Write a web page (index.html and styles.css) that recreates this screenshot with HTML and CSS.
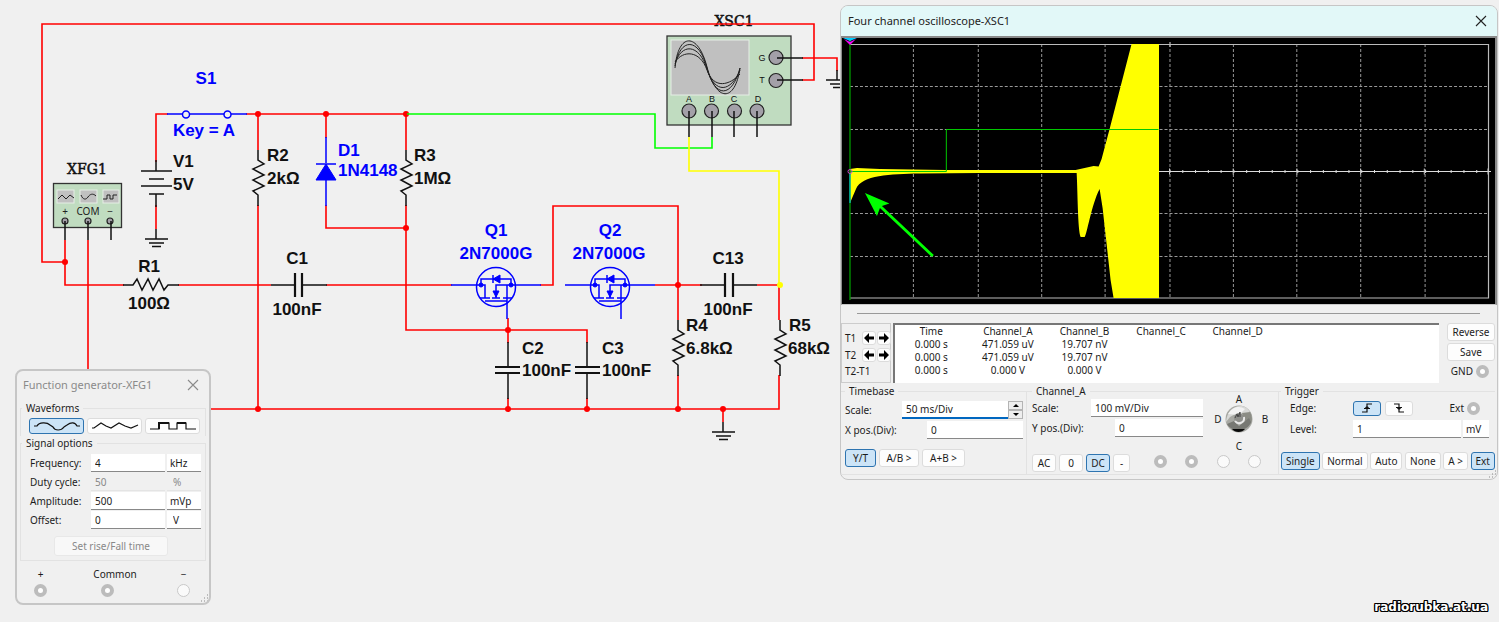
FILE: index.html
```html
<!DOCTYPE html>
<html lang="en">
<head>
<meta charset="utf-8">
<title>Circuit simulation</title>
<link rel="stylesheet" href="styles.css">
</head>
<body>
<main class="workspace">
  <svg class="circuit" viewBox="0 0 841 622" role="img" aria-label="Circuit schematic">
    <defs>
      <path id="resistor" class="part" d="M0 -28V-18L6 -14L-5 -9L6 -3L-5 2L6 8L-5 13L0 17V28"/>
      <g id="ground" class="part"><path d="M0 -10V0M-11 0H12M-7 4H8M-4 7.500H5"/></g>
      <g id="mosfet" class="blue">
        <circle cx="0" cy="0" r="19.500"/>
        <path d="M-45 -2H-15V-8H15V-2H45M-15 -2H-11V11M-16 11H-6M-4 11H4M7 11H16M0 11V-2H15M11 -2V32M-11 14H11M-3 -12V-4"/>
        <path class="solid" d="M-3 -8L4 -12V-4ZM0 10L-3 4H3Z"/>
        <circle class="solid" cx="-15" cy="-2" r="2"/><circle class="solid" cx="15" cy="-2" r="2"/>
      </g>
    </defs>

    <text class="mono" x="734" y="26" text-anchor="middle">XSC1</text>

    <g class="wire">
      <path d="M65 240V285H124M65 262H42V24H814V80H802M88 240V409H779V375"/>
      <path d="M156 162V114H168M156 205V229M246 114H406M258 114V150M258 205V409M326 114V138M326 205V228H406"/>
      <path d="M406 114V150M406 205V330H587V343M178 285H271M326 285H452M540 285H553V206H678V320M508 318V343M508 398V409M587 398V409"/>
      <path d="M655 285H702M757 285H779V320M678 375V409M723 409V422M802 58H837V71"/>
    </g>
    <g class="dots">
      <circle cx="65" cy="262" r="3"/><circle cx="258" cy="114" r="3"/><circle cx="326" cy="114" r="3"/><circle cx="406" cy="114" r="3"/>
      <circle cx="406" cy="228" r="3"/><circle cx="508" cy="330" r="3"/><circle cx="678" cy="285" r="3"/><circle cx="258" cy="409" r="3"/>
      <circle cx="508" cy="409" r="3"/><circle cx="587" cy="409" r="3"/><circle cx="678" cy="409" r="3"/><circle cx="723" cy="409" r="3"/>
    </g>
    <path class="wire green" d="M407 114H655V148H712V137"/>
    <path class="wire yellow" d="M689 137V171H779V285"/>
    <circle class="node-yellow" cx="780" cy="285" r="3"/>

    <use href="#resistor" x="258" y="178"/><use href="#resistor" x="406" y="178"/>
    <use href="#resistor" x="678" y="348"/><use href="#resistor" x="780" y="348"/>
    <use href="#resistor" transform="translate(151 285) rotate(-90)"/>
    <use href="#ground" x="156" y="239"/><use href="#ground" x="723" y="432"/><use href="#ground" x="837" y="80"/>

    <g class="part">
      <path d="M156 160V171M141 171H172M149 179H164M141 186H172M149 194H164M156 194V207"/>
      <path d="M271 285H295M302 285H327M700 285H725M733 285H757M508 342V367M508 374V399M587 342V367M587 374V399"/>
      <path class="plate" d="M295 273V297M302 273V297M725 273V297M733 273V297M495 367H520M495 373H520M575 367H600M575 373H600"/>
    </g>

    <g class="blue">
      <path d="M167 114H183M189 114H224M231 114H247"/>
      <circle cx="186" cy="114.500" r="3.500"/><circle cx="227.500" cy="114.500" r="3.500"/>
      <path d="M326 137V163M326 180V206M316 164H336"/>
      <path class="solid" d="M326 164L336 180H316Z"/>
    </g>
    <use href="#mosfet" x="496" y="287"/><use href="#mosfet" x="610" y="287"/>

    <g class="label">
      <text x="173" y="167">V1</text><text x="173" y="190">5V</text>
      <text x="267" y="161">R2</text><text x="267" y="184">2kΩ</text>
      <text x="414" y="161">R3</text><text x="414" y="184">1MΩ</text>
      <text x="149" y="272" text-anchor="middle">R1</text><text x="149" y="309" text-anchor="middle">100Ω</text>
      <text x="297" y="264" text-anchor="middle">C1</text><text x="297" y="315" text-anchor="middle">100nF</text>
      <text x="522" y="354">C2</text><text x="522" y="376">100nF</text>
      <text x="602" y="354">C3</text><text x="602" y="376">100nF</text>
      <text x="728" y="264" text-anchor="middle">C13</text><text x="728" y="315" text-anchor="middle">100nF</text>
      <text x="686" y="331">R4</text><text x="686" y="354">6.8kΩ</text>
      <text x="789" y="331">R5</text><text x="788" y="354">68kΩ</text>
    </g>
    <g class="label label-blue">
      <text x="206" y="84" text-anchor="middle">S1</text><text x="204" y="136" text-anchor="middle">Key = A</text>
      <text x="338" y="156">D1</text><text x="338" y="176">1N4148</text>
      <text x="496" y="236" text-anchor="middle">Q1</text><text x="496" y="259" text-anchor="middle">2N7000G</text>
      <text x="610" y="236" text-anchor="middle">Q2</text><text x="609" y="259" text-anchor="middle">2N7000G</text>
    </g>

    <text class="mono" x="87" y="174" text-anchor="middle">XFG1</text>
    <rect class="device" x="53.500" y="183.500" width="68" height="44"/>
    <g class="mini-screen"><rect x="57" y="190" width="17" height="13"/><rect x="80" y="190" width="17" height="13"/><rect x="103" y="190" width="16" height="13"/></g>
    <path class="trace" d="M58 199L62 195L66 199L70 195L74 198M81 195C83 200 86 200 88 197S93 193 96 196M103 199H107V195H110V199H113V195H117"/>
    <g class="port-text"><text x="65" y="215" text-anchor="middle">+</text><text x="88" y="215" text-anchor="middle">COM</text><text x="110" y="215" text-anchor="middle">−</text></g>
    <g class="terminal"><circle cx="65" cy="221" r="3"/><circle cx="88" cy="221" r="3"/><circle cx="110" cy="221" r="3"/></g>
    <path class="part" d="M65 221V240M88 221V240M111 221V240"/>

    <rect class="device" x="667" y="36" width="124" height="89"/>
    <rect class="mini-screen" x="671" y="40" width="78" height="55"/>
    <path class="trace" d="M675 68C678 32 698 32 707 67S735 103 740 68M675 66C680 37 699 37 707 68S732 98 740 68M675 64C681 43 699 43 707 69S731 92 740 70M675 62C683 50 700 50 707 70S730 85 740 74"/>
    <g class="terminal"><circle cx="776" cy="57.500" r="7"/><circle cx="776" cy="80.500" r="7"/><circle cx="689" cy="111" r="7"/><circle cx="711.500" cy="111" r="7"/><circle cx="734.500" cy="111" r="7"/><circle cx="757" cy="111" r="7"/></g>
    <path class="part" d="M777 58H803M777 80H803M689 111V137M712 111V137M734 111V137M757 111V137"/>
    <g class="pin-text"><text x="762" y="61" text-anchor="middle">G</text><text x="762" y="83" text-anchor="middle">T</text><text x="689" y="102" text-anchor="middle">A</text><text x="712" y="102" text-anchor="middle">B</text><text x="734" y="102" text-anchor="middle">C</text><text x="758" y="102" text-anchor="middle">D</text></g>
  </svg>

  <section class="window generator" aria-labelledby="gen-title">
    <header class="titlebar">
      <h2 id="gen-title">Function generator-XFG1</h2>
      <button class="close" aria-label="Close"><svg viewBox="0 0 12 12"><path d="M1 1L11 11M11 1L1 11"/></svg></button>
    </header>
    <div class="gen-body">
      <fieldset class="group waves">
        <legend>Waveforms</legend>
        <div class="wave-row">
          <button class="btn active" aria-label="Sine"><svg viewBox="0 0 48 12"><path d="M1 6H4C6 2 14 2 17 5L20 7C22 11 28 11 31 7L34 5C38 2 42 2 44 6H47"/></svg></button>
          <button class="btn" aria-label="Triangle"><svg viewBox="0 0 48 12"><path d="M1 8H3L10 3L15 6L20 8L28 3L34 6L40 8L47 5"/></svg></button>
          <button class="btn" aria-label="Square"><svg viewBox="0 0 48 12"><path d="M1 9H10V3H20V9H28V3H37V9H47"/><path class="bold" d="M10 9V3H20M28 3H37"/></svg></button>
        </div>
      </fieldset>
      <fieldset class="group signals">
        <legend>Signal options</legend>
        <div class="signal-grid">
          <label for="freq">Frequency:</label><input id="freq" value="4"><select aria-label="Frequency unit"><option>kHz</option></select>
          <label for="duty">Duty cycle:</label><input id="duty" value="50" disabled><select class="indent" aria-label="Duty unit" disabled><option>%</option></select>
          <label for="amp">Amplitude:</label><input id="amp" value="500"><select aria-label="Amplitude unit"><option>mVp</option></select>
          <label for="offs">Offset:</label><input id="offs" value="0"><select class="indent" aria-label="Offset unit"><option>V</option></select>
        </div>
        <button class="btn rise" disabled>Set rise/Fall time</button>
      </fieldset>
      <div class="terminals">
        <label>+<input type="radio" name="plus" checked></label>
        <label class="common">Common<input type="radio" name="common" checked></label>
        <label>−<input type="radio" name="minus"></label>
      </div>
    </div>
    <svg class="grip" viewBox="0 0 9 9"><path d="M7 1h1M4 4h1M7 4h1M1 7h1M4 7h1M7 7h1"/></svg>
  </section>

  <section class="window scope" aria-labelledby="scope-title">
    <header class="titlebar">
      <h2 id="scope-title">Four channel oscilloscope-XSC1</h2>
      <button class="close" aria-label="Close"><svg viewBox="0 0 12 12"><path d="M1 1L11 11M11 1L1 11"/></svg></button>
    </header>
    <svg class="screen" viewBox="842 38 654 266" preserveAspectRatio="none" role="img" aria-label="Oscilloscope display">
      <path class="grid-line" d="M913.500 44V298M978.500 44V298M1042 44V298M1105.500 44V298M1170.500 44V298M1234 44V298M1297.500 44V298M1361.500 44V298M1426 44V298M850 86.500H1489M850 129.500H1489M850 213.500H1489M850 256.500H1489"/>
      <path class="axis-frame" d="M850 44.500H1489.500V298H850M1170.500 42V47"/>
      <path class="axis" d="M850 171.500H1492"/>
      <path class="ticks" d="M1170 171.500H1490"/>
      <path class="ticks-big" d="M1169.500 171.500H1490"/>
      <path class="signal" d="M850 169L857 168L880 169L946 170H979L1076 170L1094 166L1099 166.500L1102 159L1110 129L1132 44H1159.500V298H1114L1111 280L1106 235L1103 208L1100 189C1092 204 1087 236 1085 237H1081C1078 230 1078 190 1077 173H979L920 173.500C890 174 862 175 856 189L850 203Z"/>
      <path class="channel-b" d="M850.500 171.500H946.500V129.500H1159"/>
      <path class="cursor" d="M850 40V300"/>
      <path class="cyan" d="M843 38H857L850 41ZM849.500 173H850.500V203H849.500Z"/>
      <path class="magenta" d="M844 39L850 42L856 39L850 45Z"/>
      <circle class="origin" cx="850" cy="171.500" r="2"/>
      <path class="pointer" d="M865 193L889.500 203.500L882 206L934 255L932 257L880 208L877 216Z"/>
    </svg>
    <hr class="divider">
    <div class="readout">
      <div class="cursors">
        <span>T1</span><button class="btn arrow" aria-label="T1 left"><svg viewBox="0 0 10 10"><path d="M0 5L5 0V3.500H10V6.500H5V10Z"/></svg></button><button class="btn arrow" aria-label="T1 right"><svg viewBox="0 0 10 10"><path d="M10 5L5 0V3.500H0V6.500H5V10Z"/></svg></button>
        <span>T2</span><button class="btn arrow" aria-label="T2 left"><svg viewBox="0 0 10 10"><path d="M0 5L5 0V3.500H10V6.500H5V10Z"/></svg></button><button class="btn arrow" aria-label="T2 right"><svg viewBox="0 0 10 10"><path d="M10 5L5 0V3.500H0V6.500H5V10Z"/></svg></button>
        <span class="delta">T2-T1</span>
      </div>
      <div class="table-wrap">
        <table>
          <thead><tr><th>Time</th><th>Channel_A</th><th>Channel_B</th><th>Channel_C</th><th>Channel_D</th></tr></thead>
          <tbody>
            <tr><td>0.000 s</td><td>471.059 uV</td><td>19.707 nV</td><td></td><td></td></tr>
            <tr><td>0.000 s</td><td>471.059 uV</td><td>19.707 nV</td><td></td><td></td></tr>
            <tr><td>0.000 s</td><td>0.000 V</td><td>0.000 V</td><td></td><td></td></tr>
          </tbody>
        </table>
      </div>
      <div class="side">
        <button class="btn">Reverse</button>
        <button class="btn">Save</button>
        <label>GND<input type="radio" name="gnd" checked></label>
      </div>
    </div>
    <div class="controls">
      <fieldset class="group timebase">
        <legend>Timebase</legend>
        <div class="row"><label for="tb">Scale:</label><input id="tb" class="focus wide" value="50 ms/Div"><span class="spinner"><button aria-label="Increase"><svg viewBox="0 0 8 5"><path d="M1 4L4 1L7 4Z"/></svg></button><button aria-label="Decrease"><svg viewBox="0 0 8 5"><path d="M1 1L4 4L7 1Z"/></svg></button></span></div>
        <div class="row"><label for="xp">X pos.(Div):</label><input id="xp" class="narrow" value="0"></div>
        <div class="buttons"><button class="btn active">Y/T</button><button class="btn">A/B &gt;</button><button class="btn">A+B &gt;</button></div>
      </fieldset>
      <fieldset class="group channel">
        <legend>Channel_A</legend>
        <div class="channel-top">
          <div class="channel-fields">
            <div class="row"><label for="ca">Scale:</label><input id="ca" class="wide" value="100 mV/Div"></div>
            <div class="row"><label for="yp">Y pos.(Div):</label><input id="yp" class="narrow" value="0"></div>
          </div>
          <div class="rotary">
            <span class="north">A</span><span class="west">D</span>
            <svg class="knob" viewBox="0 0 28 28"><circle cx="14" cy="14" r="13.500" fill="#a7a8a3"/><path d="M1 17C2 5 10 0 17 1S28 11 26 15L18 10L12 8L5 12Z" fill="#d7d8d6"/><path d="M3 9C7 2 14 0 20 4L14 10Z" fill="#f2f2f2"/><path d="M17 8L25 7C28 12 27 17 25 19L19 15Z" fill="#8b8c84"/><path d="M2 19L9 16L14 21L24 13L26 17C23 27 7 28 2 19Z" fill="#777873"/><path d="M7 24L20 24C17 28 10 28 7 24Z" fill="#080808"/><circle cx="14" cy="13" r="5" fill="#8e8f8b"/><path d="M10 16C13 20 20 18 19 12" fill="none" stroke="#e8e8e8" stroke-width="2"/><path d="M10 13L12 9L13 12L15 7V12" fill="none" stroke="#444"/></svg>
            <span class="east">B</span><span class="south">C</span>
          </div>
        </div>
        <div class="buttons"><button class="btn">AC</button><button class="btn">0</button><button class="btn active">DC</button><button class="btn">-</button>
          <span class="ports"><input type="radio" name="pa" aria-label="Port A" checked><input type="radio" name="pb" aria-label="Port B" checked><input type="radio" name="pc" aria-label="Port C"><input type="radio" name="pd" aria-label="Port D"></span></div>
      </fieldset>
      <fieldset class="group trigger">
        <legend>Trigger</legend>
        <div class="row"><span class="caption">Edge:</span><span class="edges"><button class="btn active" aria-label="Rising edge"><svg viewBox="0 0 12 10"><path d="M1 9H6V1H11M3 5.500H9M4.500 5L6 3.500L7.500 5"/></svg></button><button class="btn" aria-label="Falling edge"><svg viewBox="0 0 12 10"><path d="M1 1H6V9H11M3 4.500H9M4.500 5L6 6.500L7.500 5"/></svg></button></span><label class="ext">Ext<input type="radio" name="ext" checked></label></div>
        <div class="row level"><label class="caption" for="lv">Level:</label><input id="lv" value="1"><select aria-label="Level unit"><option>mV</option></select></div>
        <div class="buttons"><button class="btn active">Single</button><button class="btn">Normal</button><button class="btn">Auto</button><button class="btn">None</button><button class="btn">A &gt;</button><button class="btn active">Ext</button></div>
      </fieldset>
    </div>
    <svg class="grip" viewBox="0 0 9 9"><path d="M7 1h1M4 4h1M7 4h1M1 7h1M4 7h1M7 7h1"/></svg>
  </section>

  <a class="watermark" href="#">radiorubka.at.ua</a>
</main>
</body>
</html>
```

FILE: styles.css
```css
* { box-sizing: border-box; }
body {
  margin: 0;
  background: #f0f0f0;
  color: #1c1c1c;
  font: 10px/14px "Noto Sans", "Open Sans", sans-serif;
}
button, input, select { font: inherit; color: inherit; margin: 0; }
.workspace { position: relative; min-height: 100vh; overflow: hidden; }

/* Schematic */
.circuit { display: block; width: 841px; max-width: none; }
.wire { fill: none; stroke: #f00; stroke-width: 1.6; }
.wire.green { stroke: #0f0; }
.wire.yellow { stroke: #ff0; }
.dots { fill: #f00; }
.node-yellow { fill: #ff0; }
.part { fill: none; stroke: #111; stroke-width: 1.5; }
.plate { stroke-width: 2.2; }
.blue { fill: none; stroke: #00f; stroke-width: 1.5; }
.blue .solid { fill: #00f; stroke-width: 1; }
.label { font: bold 17px "Liberation Sans", Arial, sans-serif; fill: #111; }
.label-blue { fill: #00f; }
.mono { font: 14px "DejaVu Serif", serif; fill: #111; stroke: #111; stroke-width: .5; }
.device { fill: #c0dcc0; stroke: #333; stroke-width: 1.3; }
.mini-screen { fill: #c0c0c0; stroke: #e6eee6; stroke-width: 1; }
.trace { fill: none; stroke: #222; stroke-width: 1; }
.terminal { fill: #a3a0a8; stroke: #222; stroke-width: 1.2; }
.port-text { font-size: 10px; fill: #222; }
.pin-text { font: 9px "Liberation Sans", sans-serif; fill: #111; }

/* Windows */
.window { position: absolute; border: 1px solid #c6c6c6; border-radius: 8px; background: #f0f0f0; overflow: hidden; }
.titlebar { display: flex; align-items: center; justify-content: space-between; height: 30px; padding: 0 10px 0 7px; }
.titlebar h2 { margin: 0; font: 11px/16px "Noto Sans", sans-serif; }
.close { display: flex; padding: 0; border: 0; background: none; }
.close svg { width: 12px; height: 12px; fill: none; stroke: currentColor; stroke-width: 1.1; }
.grip { position: absolute; right: 0; bottom: 0; width: 9px; height: 9px; stroke: #888; }

.group { min-width: 0; margin: 0; padding: 0; border: 1px solid #e2e2e2; }
.group legend { padding: 0 4px; line-height: 14px; }
.btn { display: inline-flex; align-items: center; justify-content: center; height: 18px; padding: 0; border: 1px solid #dcdcdc; border-radius: 3px; background: #fdfdfd; }
.btn.active { border-color: #2e74b0; background: #cce4f7; }
input:not([type]), select { width: 100%; min-width: 0; height: 18px; padding: 0 4px; border: 0; border-bottom: 1px solid #888; border-radius: 0; background: #fff; appearance: none; }
select { padding: 0 3px; }
input[type="radio"] { appearance: none; flex: none; width: 13px; height: 13px; border: 1px solid #c8c8c8; border-radius: 50%; background: #fafafa; }
input[type="radio"]:checked { border: 4px solid #bcbcbc; background: #fff; }

/* Function generator */
.generator { left: 15px; top: 369px; width: 196px; border-width: 2px; }
.generator .titlebar { color: #8a8a8a; height: 28px; padding: 0 10px 0 6px; }
.gen-body { padding: 2px 3px 6px; }
.waves { border-bottom: 0; padding: 3px 5px 2px 8px; }
.wave-row { display: grid; grid-template-columns: repeat(3, 1fr); gap: 3px; }
.wave-row .btn { height: 16px; }
.wave-row svg { width: 48px; height: 12px; fill: none; stroke: #111; stroke-width: 1.2; }
.wave-row .bold { stroke-width: 2; }
.signals { padding: 4px 4px 4px 9px; display: flex; flex-direction: column; }
.group.waves legend { margin-left: -7px; }
.group.signals legend { margin-left: -8px; }
.signal-grid { display: grid; grid-template-columns: 59px 1fr 34px; gap: 1px 2px; align-items: center; }
.signal-grid :disabled { opacity: 1; color: #888; background: #f0f0f0; border-bottom-color: #e4e4e4; }
.signal-grid .indent { padding-left: 6px; }
.rise { display: flex; width: 114px; height: 20px; margin: 7px auto 0 24px; background: #f8f8f8; border-color: #e8e8e8; color: #888; }
.terminals { display: flex; justify-content: space-between; padding: 6px 16px 0 14px; }
.terminals label { display: flex; flex-direction: column; align-items: center; gap: 3px; }
.terminals .common { align-items: flex-start; margin-left: 6px; }
.common input { margin-left: 8px; }

/* Oscilloscope */
.scope { left: 840px; right: 1px; top: 5px; min-width: 640px; }
.scope .titlebar { background: #e2f8f8; }
.scope .close { color: #222; }
.scope h2 { color: #222; }
.screen { display: block; width: 100%; height: 269px; border: 1px solid #8a8a8a; border-width: 2px 2px 1px 1px; border-bottom-color: #c8c8c8; background: #000; }
.grid-line { fill: none; stroke: #999; stroke-width: 1; stroke-dasharray: 3 2; }
.axis-frame { fill: none; stroke: #bbb; stroke-width: 1.2; }
.axis { stroke: #ddd; stroke-width: 1; }
.ticks { stroke: #ddd; stroke-width: 3; stroke-dasharray: 1 11.8; }
.ticks-big { stroke: #ccc; stroke-width: 6; stroke-dasharray: 1 62.8; }
.signal { fill: #ff0; }
.channel-b { fill: none; stroke: #00c800; stroke-width: 1; }
.cursor { stroke: #009000; stroke-width: 1.4; }
.cyan { fill: #0cf; }
.magenta { fill: #f0f; }
.origin { fill: none; stroke: #c4c; }
.pointer { fill: #0f0; }
.divider { height: 1px; margin: 8px 17px 9px 16px; border: 0; background: #999; }
.readout { display: grid; grid-template-columns: 50px minmax(0, 1fr) 48px; column-gap: 2px; height: 60px; margin-right: 2px; }
.cursors { display: grid; grid-template-columns: 16px 14px 14px; grid-template-rows: 15px 15px 14px; column-gap: 1px; row-gap: 2px; align-items: center; padding: 6px 0 0 3px; border: 1px solid #ccc; }
.arrow { height: 14px; }
.arrow svg { flex: none; width: 10px; height: 10px; }
.delta { grid-column: 1 / 4; }
.table-wrap { margin-right: 6px; border: 1px solid #777; border-width: 2px 0 0 2px; background: #fff; overflow: hidden; }
table { border-collapse: collapse; table-layout: fixed; width: 383px; margin-left: -2px; }
th, td { height: 13px; padding: 0; font-weight: 400; line-height: 13px; text-align: center; }
.side { display: flex; flex-direction: column; gap: 2px; }
.side label { display: flex; align-items: center; justify-content: flex-end; gap: 3px; margin: 0 6px 0 0; padding-top: 1px; }
.controls { display: grid; grid-template-columns: 185px 252px minmax(0, 1fr); padding: 1px 2px 4px 0; }
.controls .group { display: flex; flex-direction: column; border-left-width: 0; }
.controls .group + .group { border-left-width: 1px; border-right-width: 0; }
.row { display: flex; align-items: center; justify-content: space-between; height: 18px; margin-bottom: 2px; }
.row .wide { width: 112px; }
.row .narrow { width: 88px; }
.buttons { display: flex; gap: 3px; }
.timebase { padding: 3px 3px 5px 4px; }
.controls .timebase { border-right-width: 0; }
.timebase .row .wide { width: 106px; margin-left: auto; }
.timebase .row .narrow { width: 96px; }
.row .focus { border-bottom: 2px solid #0067c0; }
.spinner { display: grid; grid-template-rows: 1fr 1fr; width: 15px; height: 18px; }
.spinner button { display: flex; align-items: center; justify-content: center; padding: 0; border: 1px solid #b4b4b4; background: #eee; }
.spinner svg { width: 8px; height: 5px; }
.timebase .buttons { margin-top: 8px; }
.timebase .btn { width: 40px; }
.timebase .btn:first-child { width: 31px; }
.timebase .btn:last-child { width: 43px; }
.channel { padding: 1px 3px 2px 5px; }
.channel-top { display: flex; gap: 10px; height: 40px; }
.channel-fields { width: 171px; }
.rotary { display: grid; grid-template-columns: 10px 28px 10px; grid-template-rows: 12px 28px 26px; column-gap: 2px; justify-items: center; align-items: center; height: 66px; margin-top: -6px; }
.north { grid-column: 2; grid-row: 1; }
.west { grid-column: 1; grid-row: 2; }
.knob { width: 28px; height: 28px; grid-column: 2; grid-row: 2; }
.east { grid-column: 3; grid-row: 2; padding-left: 10px; }
.south { grid-column: 2; grid-row: 3; }
.channel .buttons { margin-top: 15px; }
.channel .btn { width: 24px; }
.channel .btn:nth-child(4) { width: 17px; }
.ports { display: flex; flex: 1; align-items: center; justify-content: space-between; margin: 0 14px 4px 21px; }
.trigger { padding: 1px 0 4px 2px; }
.caption { width: 72px; padding-left: 9px; }
.trigger .row { height: 18px; }
.edges { display: flex; gap: 4px; }
.edges .btn { width: 28px; height: 15px; }
.edges svg { width: 12px; height: 10px; fill: none; stroke: #111; stroke-width: 1.2; }
.ext { display: flex; align-items: center; gap: 3px; margin: 0 15px 0 auto; }
.level input { flex: 1; }
.trigger .level { gap: 2px; margin: 1px 6px 0 0; }
.level .caption { width: 70px; }
.level select { width: 26px; }
.trigger .buttons { justify-content: space-between; gap: 2px; margin-top: 14px; }
.trigger .btn:not([aria-label]) { padding: 0 4px; }

.watermark {
  position: absolute; right: 11px; bottom: 8px;
  color: #fff; font: bold 12px/14px "DejaVu Sans", sans-serif; text-decoration: none;
  text-shadow: 1px 0 #000, -1px 0 #000, 0 1px #000, 0 -1px #000, 1px 1px #000, -1px -1px #000, 1px -1px #000, -1px 1px #000;
}
```
